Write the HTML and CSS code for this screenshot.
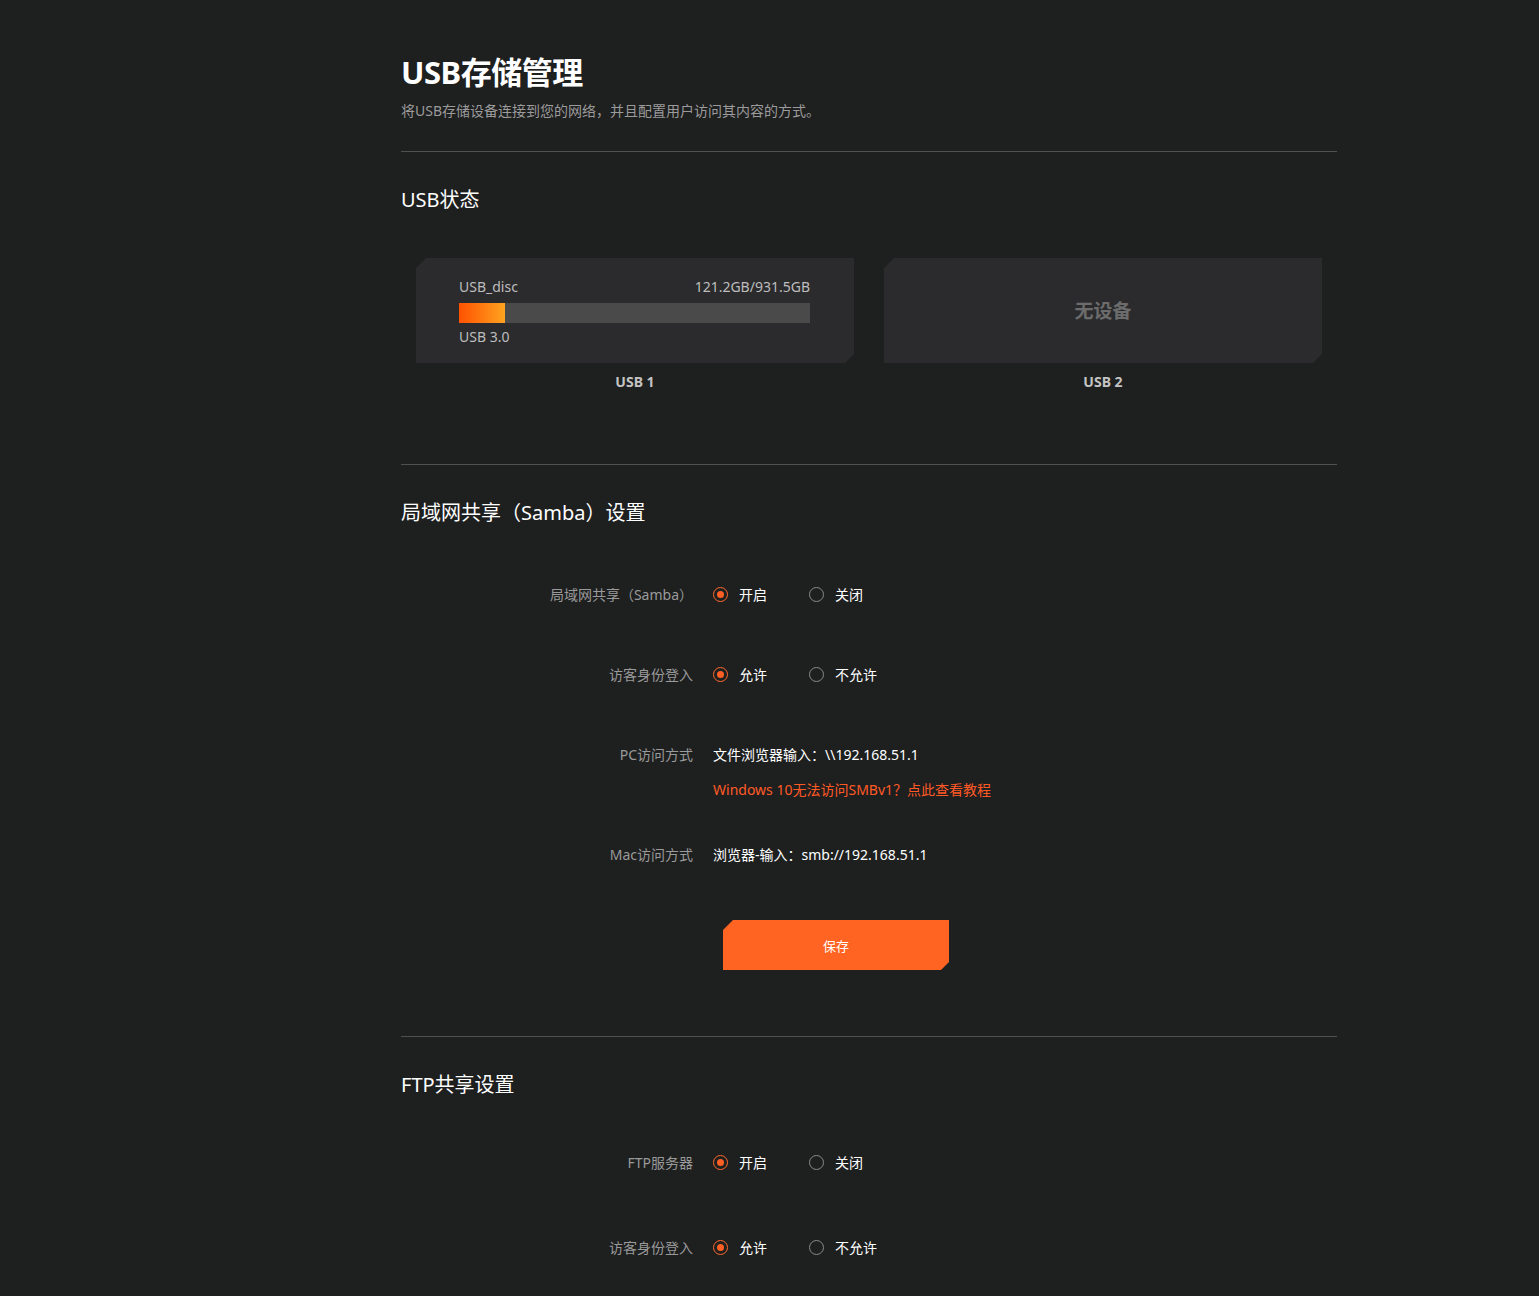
FILE: index.html
```html
<!DOCTYPE html>
<html lang="zh-CN">
<head>
    <meta charset="UTF-8">
    <title>USB存储管理</title>
    <link rel="stylesheet" href="styles.css">
</head>
<body>
    <div class="page">
        <h1 class="titulo">USB存储管理</h1>
        <p class="subtitulo">将USB存储设备连接到您的网络，并且配置用户访问其内容的方式。</p>
        <div class="divisor"></div>

        <h2 class="secao">USB状态</h2>
        <div class="portas">
            <div class="porta">
                <div class="cartao">
                    <div class="linha-disco">
                        <span>USB_disc</span>
                        <span>121.2GB/931.5GB</span>
                    </div>
                    <div class="barra"><div class="preenchido" style="width: 13%"></div></div>
                    <div class="versao">USB 3.0</div>
                </div>
                <div class="nome-porta">USB 1</div>
            </div>
            <div class="porta">
                <div class="cartao vazio">无设备</div>
                <div class="nome-porta">USB 2</div>
            </div>
        </div>
        <div class="divisor divisor-usb"></div>

        <h2 class="secao">局域网共享（Samba）设置</h2>
        <div class="formulario">
            <div class="campo">
                <label class="rotulo">局域网共享（Samba）</label>
                <div class="opcoes">
                    <span class="opcao"><i class="radio marcado"></i>开启</span>
                    <span class="opcao"><i class="radio"></i>关闭</span>
                </div>
            </div>
            <div class="campo">
                <label class="rotulo">访客身份登入</label>
                <div class="opcoes">
                    <span class="opcao"><i class="radio marcado"></i>允许</span>
                    <span class="opcao"><i class="radio"></i>不允许</span>
                </div>
            </div>
            <div class="campo">
                <label class="rotulo">PC访问方式</label>
                <div class="valor">文件浏览器输入：\\192.168.51.1</div>
            </div>
            <div class="campo campo-link">
                <span class="rotulo"></span>
                <a class="link" href="#">Windows 10无法访问SMBv1？点此查看教程</a>
            </div>
            <div class="campo campo-mac">
                <label class="rotulo">Mac访问方式</label>
                <div class="valor">浏览器-输入：smb://192.168.51.1</div>
            </div>
            <div class="acoes">
                <button class="salvar">保存</button>
            </div>
        </div>
        <div class="divisor divisor-samba"></div>

        <h2 class="secao">FTP共享设置</h2>
        <div class="formulario formulario-ftp">
            <div class="campo">
                <label class="rotulo">FTP服务器</label>
                <div class="opcoes">
                    <span class="opcao"><i class="radio marcado"></i>开启</span>
                    <span class="opcao"><i class="radio"></i>关闭</span>
                </div>
            </div>
            <div class="campo campo-ftp">
                <label class="rotulo">访客身份登入</label>
                <div class="opcoes">
                    <span class="opcao"><i class="radio marcado"></i>允许</span>
                    <span class="opcao"><i class="radio"></i>不允许</span>
                </div>
            </div>
        </div>
    </div>
</body>
</html>
```

FILE: styles.css
```css
body {
    margin: 0;
    background-color: #1e1f1f;
    font-family: "Noto Sans", "Noto Sans CJK SC", sans-serif;
    color: #fff;
    height: 1296px;
    overflow: hidden;
}

.page {
    width: 936px;
    padding: 52px 0 0 401px;
}

.titulo {
    margin: 0;
    font-size: 31px;
    line-height: 40px;
    font-weight: 700;
    letter-spacing: -0.5px;
}

.subtitulo {
    margin: 9px 0 0;
    font-size: 14px;
    line-height: 20px;
    color: #9b9b9b;
}

.divisor {
    height: 1px;
    background-color: #505050;
    margin-top: 30px;
}

.secao {
    margin: 34px 0 0;
    font-size: 20px;
    line-height: 28px;
    font-weight: 400;
}

/* cartoes USB */
.portas {
    display: flex;
    gap: 30px;
    margin: 44px 15px 0;
}

.porta {
    flex: 1;
}

.cartao {
    height: 105px;
    box-sizing: border-box;
    padding: 19px 44px 0 43px;
    background-color: #2b2b2d;
    clip-path: polygon(10px 0, 100% 0, 100% calc(100% - 9px), calc(100% - 9px) 100%, 0 100%, 0 10px);
    font-size: 14px;
    line-height: 20px;
    color: #bdbdbd;
}

.linha-disco {
    display: flex;
    justify-content: space-between;
}

.barra {
    height: 20px;
    margin-top: 6px;
    background-color: #4a4a4a;
}

.preenchido {
    height: 100%;
    background: linear-gradient(90deg, #ff5200, #ff7a10 50%, #ffa31f);
}

.versao {
    margin-top: 4px;
}

.vazio {
    padding: 0;
    display: flex;
    align-items: center;
    justify-content: center;
    font-size: 19px;
    font-weight: 700;
    color: #6c6c6c;
}

.nome-porta {
    margin-top: 9px;
    text-align: center;
    font-size: 14px;
    line-height: 20px;
    font-weight: 700;
    color: #c4c4c4;
}

.divisor-usb {
    margin-top: 72px;
}

/* formulario */
.formulario {
    margin-top: 57px;
}

.formulario-ftp {
    margin-top: 53px;
}

.campo {
    display: flex;
    align-items: center;
    height: 20px;
    margin-bottom: 60px;
    font-size: 14px;
}

.campo:has(+ .campo-link) {
    margin-bottom: 15px;
}

.campo-link {
    margin-bottom: 45px;
}

.campo-mac {
    margin-bottom: 56px;
}

.rotulo {
    width: 292px;
    margin-right: 20px;
    text-align: right;
    color: #9a9a9a;
    flex-shrink: 0;
}

.opcoes {
    display: flex;
}

.opcao {
    display: flex;
    align-items: center;
    width: 96px;
    color: #fff;
}

.radio {
    width: 13px;
    height: 13px;
    border: 1px solid #8a8a8a;
    border-radius: 50%;
    margin-right: 11px;
    position: relative;
    box-sizing: content-box;
}

.radio.marcado {
    border-color: #ff6a2c;
}

.radio.marcado::after {
    content: "";
    position: absolute;
    left: 3px;
    top: 3px;
    width: 7px;
    height: 7px;
    border-radius: 50%;
    background-color: #ff5f22;
}

.valor {
    color: #fff;
}

.link {
    color: #ff5a26;
    text-decoration: none;
}

.acoes {
    padding-left: 322px;
}

.salvar {
    width: 226px;
    height: 50px;
    border: none;
    background-color: #ff6422;
    color: #fff;
    font-family: inherit;
    font-size: 13px;
    cursor: pointer;
    clip-path: polygon(10px 0, 100% 0, 100% calc(100% - 8px), calc(100% - 8px) 100%, 0 100%, 0 10px);
}

.divisor-samba {
    margin-top: 66px;
}

.campo-ftp {
    margin-top: 65px;
}
```
